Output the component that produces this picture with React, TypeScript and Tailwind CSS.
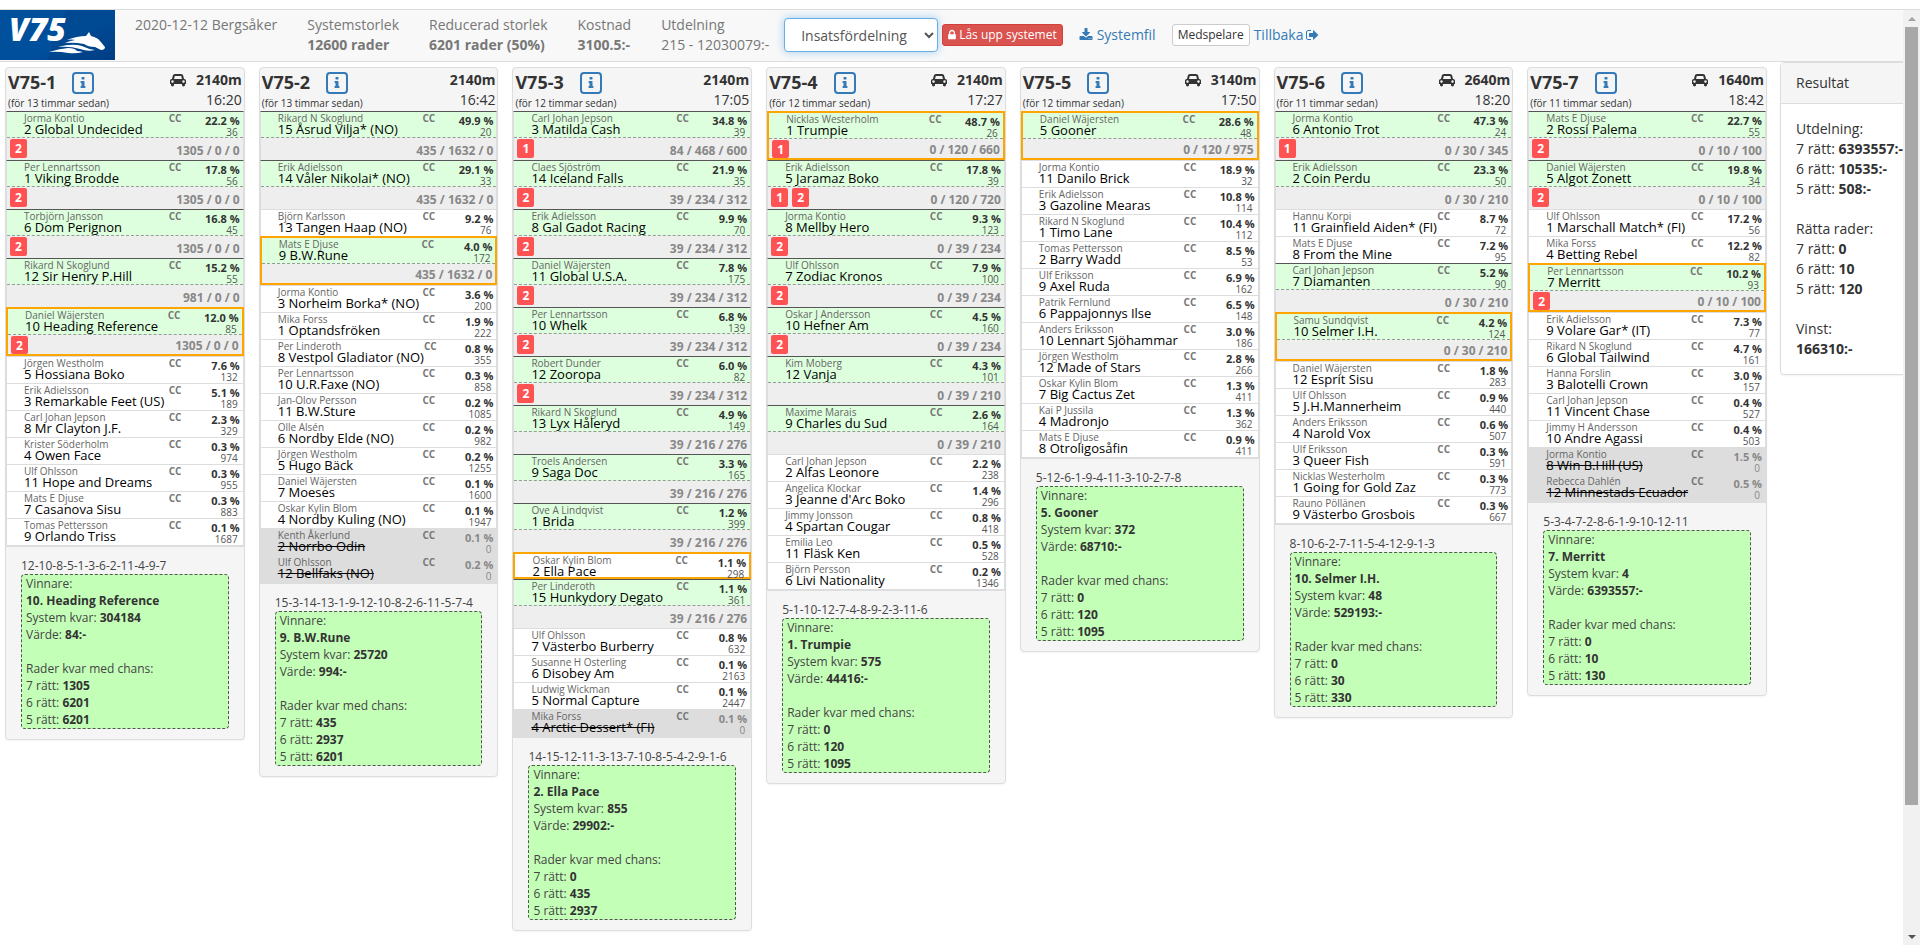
import React from 'react';
import clsx from 'clsx';

interface Horse {
  driver: string;
  name: string;
  percent: string;
  odds: number;
  chances?: string;
  badges?: number[];
  winner?: boolean;
  scratched?: boolean;
}

interface Race {
  id: number;
  updated: string;
  auto: boolean;
  distance: string;
  time: string;
  horses: Horse[];
  ranking: string;
  systems: string;
  value: string;
  left: [number, number, number];
}

type Extra = Omit<Horse, 'driver' | 'name' | 'percent' | 'odds'>;

const h = (driver: string, name: string, percent: string, odds: number, extra: Extra = {}): Horse => ({
  driver,
  name,
  percent,
  odds,
  ...extra,
});

const races: Race[] = [
  {
    id: 1,
    updated: 'för 13 timmar sedan',
    auto: true,
    distance: '2140m',
    time: '16:20',
    horses: [
      h('Jorma Kontio', '2 Global Undecided', '22.2', 36, { chances: '1305 / 0 / 0', badges: [2] }),
      h('Per Lennartsson', '1 Viking Brodde', '17.8', 56, { chances: '1305 / 0 / 0', badges: [2] }),
      h('Torbjörn Jansson', '6 Dom Perignon', '16.8', 45, { chances: '1305 / 0 / 0', badges: [2] }),
      h('Rikard N Skoglund', '12 Sir Henry P.Hill', '15.2', 55, { chances: '981 / 0 / 0' }),
      h('Daniel Wäjersten', '10 Heading Reference', '12.0', 85, { chances: '1305 / 0 / 0', badges: [2], winner: true }),
      h('Jörgen Westholm', '5 Hossiana Boko', '7.6', 132),
      h('Erik Adielsson', '3 Remarkable Feet (US)', '5.1', 189),
      h('Carl Johan Jepson', '8 Mr Clayton J.F.', '2.3', 329),
      h('Krister Söderholm', '4 Owen Face', '0.3', 974),
      h('Ulf Ohlsson', '11 Hope and Dreams', '0.3', 955),
      h('Mats E Djuse', '7 Casanova Sisu', '0.3', 883),
      h('Tomas Pettersson', '9 Orlando Triss', '0.1', 1687),
    ],
    ranking: '12-10-8-5-1-3-6-2-11-4-9-7',
    systems: '304184',
    value: '84:-',
    left: [1305, 6201, 6201],
  },
  {
    id: 2,
    updated: 'för 13 timmar sedan',
    auto: false,
    distance: '2140m',
    time: '16:42',
    horses: [
      h('Rikard N Skoglund', '15 Åsrud Vilja* (NO)', '49.9', 20, { chances: '435 / 1632 / 0' }),
      h('Erik Adielsson', '14 Våler Nikolai* (NO)', '29.1', 33, { chances: '435 / 1632 / 0' }),
      h('Björn Karlsson', '13 Tangen Haap (NO)', '9.2', 76),
      h('Mats E Djuse', '9 B.W.Rune', '4.0', 172, { chances: '435 / 1632 / 0', winner: true }),
      h('Jorma Kontio', '3 Norheim Borka* (NO)', '3.6', 200),
      h('Mika Forss', '1 Optandsfröken', '1.9', 222),
      h('Per Linderoth', '8 Vestpol Gladiator (NO)', '0.8', 355),
      h('Per Lennartsson', '10 U.R.Faxe (NO)', '0.3', 858),
      h('Jan-Olov Persson', '11 B.W.Sture', '0.2', 1085),
      h('Olle Alsén', '6 Nordby Elde (NO)', '0.2', 982),
      h('Jörgen Westholm', '5 Hugo Bäck', '0.2', 1255),
      h('Daniel Wäjersten', '7 Moeses', '0.1', 1600),
      h('Oskar Kylin Blom', '4 Nordby Kuling (NO)', '0.1', 1947),
      h('Kenth Åkerlund', '2 Norrbo Odin', '0.1', 0, { scratched: true }),
      h('Ulf Ohlsson', '12 Bellfaks (NO)', '0.2', 0, { scratched: true }),
    ],
    ranking: '15-3-14-13-1-9-12-10-8-2-6-11-5-7-4',
    systems: '25720',
    value: '994:-',
    left: [435, 2937, 6201],
  },
  {
    id: 3,
    updated: 'för 12 timmar sedan',
    auto: false,
    distance: '2140m',
    time: '17:05',
    horses: [
      h('Carl Johan Jepson', '3 Matilda Cash', '34.8', 39, { chances: '84 / 468 / 600', badges: [1] }),
      h('Claes Sjöström', '14 Iceland Falls', '21.9', 35, { chances: '39 / 234 / 312', badges: [2] }),
      h('Erik Adielsson', '8 Gal Gadot Racing', '9.9', 70, { chances: '39 / 234 / 312', badges: [2] }),
      h('Daniel Wäjersten', '11 Global U.S.A.', '7.8', 175, { chances: '39 / 234 / 312', badges: [2] }),
      h('Per Lennartsson', '10 Whelk', '6.8', 139, { chances: '39 / 234 / 312', badges: [2] }),
      h('Robert Dunder', '12 Zooropa', '6.0', 82, { chances: '39 / 234 / 312', badges: [2] }),
      h('Rikard N Skoglund', '13 Lyx Håleryd', '4.9', 149, { chances: '39 / 216 / 276' }),
      h('Troels Andersen', '9 Saga Doc', '3.3', 165, { chances: '39 / 216 / 276' }),
      h('Ove A Lindqvist', '1 Brida', '1.2', 399, { chances: '39 / 216 / 276' }),
      h('Oskar Kylin Blom', '2 Ella Pace', '1.1', 298, { winner: true }),
      h('Per Linderoth', '15 Hunkydory Degato', '1.1', 361, { chances: '39 / 216 / 276' }),
      h('Ulf Ohlsson', '7 Västerbo Burberry', '0.8', 632),
      h('Susanne H Osterling', '6 Disobey Am', '0.1', 2163),
      h('Ludwig Wickman', '5 Normal Capture', '0.1', 2447),
      h('Mika Forss', '4 Arctic Dessert* (FI)', '0.1', 0, { scratched: true }),
    ],
    ranking: '14-15-12-11-3-13-7-10-8-5-4-2-9-1-6',
    systems: '855',
    value: '29902:-',
    left: [0, 435, 2937],
  },
  {
    id: 4,
    updated: 'för 12 timmar sedan',
    auto: true,
    distance: '2140m',
    time: '17:27',
    horses: [
      h('Nicklas Westerholm', '1 Trumpie', '48.7', 26, { chances: '0 / 120 / 660', badges: [1], winner: true }),
      h('Erik Adielsson', '5 Jaramaz Boko', '17.8', 39, { chances: '0 / 120 / 720', badges: [1, 2] }),
      h('Jorma Kontio', '8 Mellby Hero', '9.3', 123, { chances: '0 / 39 / 234', badges: [2] }),
      h('Ulf Ohlsson', '7 Zodiac Kronos', '7.9', 100, { chances: '0 / 39 / 234', badges: [2] }),
      h('Oskar J Andersson', '10 Hefner Am', '4.5', 160, { chances: '0 / 39 / 234', badges: [2] }),
      h('Kim Moberg', '12 Vanja', '4.3', 101, { chances: '0 / 39 / 210' }),
      h('Maxime Marais', '9 Charles du Sud', '2.6', 164, { chances: '0 / 39 / 210' }),
      h('Carl Johan Jepson', '2 Alfas Leonore', '2.2', 238),
      h('Angelica Klockar', "3 Jeanne d'Arc Boko", '1.4', 296),
      h('Jimmy Jonsson', '4 Spartan Cougar', '0.8', 418),
      h('Emilia Leo', '11 Fläsk Ken', '0.5', 528),
      h('Björn Persson', '6 Livi Nationality', '0.2', 1346),
    ],
    ranking: '5-1-10-12-7-4-8-9-2-3-11-6',
    systems: '575',
    value: '44416:-',
    left: [0, 120, 1095],
  },
  {
    id: 5,
    updated: 'för 12 timmar sedan',
    auto: true,
    distance: '3140m',
    time: '17:50',
    horses: [
      h('Daniel Wäjersten', '5 Gooner', '28.6', 48, { chances: '0 / 120 / 975', winner: true }),
      h('Jorma Kontio', '11 Danilo Brick', '18.9', 32),
      h('Erik Adielsson', '3 Gazoline Mearas', '10.8', 114),
      h('Rikard N Skoglund', '1 Timo Lane', '10.4', 112),
      h('Tomas Pettersson', '2 Barry Wadd', '8.5', 53),
      h('Ulf Eriksson', '9 Axel Ruda', '6.9', 162),
      h('Patrik Fernlund', '6 Pappajonnys Ilse', '6.5', 148),
      h('Anders Eriksson', '10 Lennart Sjöhammar', '3.0', 186),
      h('Jörgen Westholm', '12 Made of Stars', '2.8', 266),
      h('Oskar Kylin Blom', '7 Big Cactus Zet', '1.3', 411),
      h('Kai P Jussila', '4 Madronjo', '1.3', 362),
      h('Mats E Djuse', '8 Otroligosåfin', '0.9', 411),
    ],
    ranking: '5-12-6-1-9-4-11-3-10-2-7-8',
    systems: '372',
    value: '68710:-',
    left: [0, 120, 1095],
  },
  {
    id: 6,
    updated: 'för 11 timmar sedan',
    auto: true,
    distance: '2640m',
    time: '18:20',
    horses: [
      h('Jorma Kontio', '6 Antonio Trot', '47.3', 24, { chances: '0 / 30 / 345', badges: [1] }),
      h('Erik Adielsson', '2 Coin Perdu', '23.3', 50, { chances: '0 / 30 / 210' }),
      h('Hannu Korpi', '11 Grainfield Aiden* (FI)', '8.7', 72),
      h('Mats E Djuse', '8 From the Mine', '7.2', 95),
      h('Carl Johan Jepson', '7 Diamanten', '5.2', 90, { chances: '0 / 30 / 210' }),
      h('Samu Sundqvist', '10 Selmer I.H.', '4.2', 124, { chances: '0 / 30 / 210', winner: true }),
      h('Daniel Wäjersten', '12 Esprit Sisu', '1.8', 283),
      h('Ulf Ohlsson', '5 J.H.Mannerheim', '0.9', 440),
      h('Anders Eriksson', '4 Narold Vox', '0.6', 507),
      h('Ulf Eriksson', '3 Queer Fish', '0.3', 591),
      h('Nicklas Westerholm', '1 Going for Gold Zaz', '0.3', 773),
      h('Rauno Pöllänen', '9 Västerbo Grosbois', '0.3', 667),
    ],
    ranking: '8-10-6-2-7-11-5-4-12-9-1-3',
    systems: '48',
    value: '529193:-',
    left: [0, 30, 330],
  },
  {
    id: 7,
    updated: 'för 11 timmar sedan',
    auto: true,
    distance: '1640m',
    time: '18:42',
    horses: [
      h('Mats E Djuse', '2 Rossi Palema', '22.7', 55, { chances: '0 / 10 / 100', badges: [2] }),
      h('Daniel Wäjersten', '5 Algot Zonett', '19.8', 34, { chances: '0 / 10 / 100', badges: [2] }),
      h('Ulf Ohlsson', '1 Marschall Match* (FI)', '17.2', 56),
      h('Mika Forss', '4 Betting Rebel', '12.2', 82),
      h('Per Lennartsson', '7 Merritt', '10.2', 93, { chances: '0 / 10 / 100', badges: [2], winner: true }),
      h('Erik Adielsson', '9 Volare Gar* (IT)', '7.3', 77),
      h('Rikard N Skoglund', '6 Global Tailwind', '4.7', 161),
      h('Hanna Forslin', '3 Balotelli Crown', '3.0', 157),
      h('Carl Johan Jepson', '11 Vincent Chase', '0.4', 527),
      h('Jimmy H Andersson', '10 Andre Agassi', '0.4', 503),
      h('Jorma Kontio', '8 Win B.Hill (US)', '1.5', 0, { scratched: true }),
      h('Rebecca Dahlén', '12 Minnestads Ecuador', '0.5', 0, { scratched: true }),
    ],
    ranking: '5-3-4-7-2-8-6-1-9-10-12-11',
    systems: '4',
    value: '6393557:-',
    left: [0, 10, 130],
  },
];

const icons = {
  info: {
    viewBox: '0 0 1792 1792',
    d: 'M1216 1344v128q0 26-19 45t-45 19h-512q-26 0-45-19t-19-45v-128q0-26 19-45t45-19h64v-384h-64q-26 0-45-19t-19-45v-128q0-26 19-45t45-19h384q26 0 45 19t19 45v576h64q26 0 45 19t19 45zm-128-1152v192q0 26-19 45t-45 19h-256q-26 0-45-19t-19-45v-192q0-26 19-45t45-19h256q26 0 45 19t19 45z',
  },
  car: {
    viewBox: '0 0 2048 1792',
    d: 'M480 1088q0-66-47-113t-113-47-113 47-47 113 47 113 113 47 113-47 47-113zm36-320h1016l-89-357q-2-8-14-17.5t-21-9.5h-768q-9 0-21 9.5t-14 17.5zm1372 320q0-66-47-113t-113-47-113 47-47 113 47 113 113 47 113-47 47-113zm160-96v384q0 14-9 23t-23 9h-96v128q0 80-56 136t-136 56-136-56-56-136v-128h-1024v128q0 80-56 136t-136 56-136-56-56-136v-128h-96q-14 0-23-9t-9-23v-384q0-93 65.5-158.5t158.5-65.5h28l105-419q23-94 104-157.5t179-63.5h768q98 0 179 63.5t104 157.5l105 419h28q93 0 158.5 65.5t65.5 158.5z',
  },
  lock: {
    viewBox: '320 0 1152 1792',
    d: 'M640 768h512v-192q0-106-75-181t-181-75-181 75-75 181v192zm832 96v576q0 40-28 68t-68 28h-960q-40 0-68-28t-28-68v-576q0-40 28-68t68-28h32v-192q0-184 132-316t316-132 316 132 132 316v192h32q40 0 68 28t28 68z',
  },
  download: {
    viewBox: '0 0 1792 1792',
    d: 'M1344 1344q0-26-19-45t-45-19-45 19-19 45 19 45 45 19 45-19 19-45zm256 0q0-26-19-45t-45-19-45 19-19 45 19 45 45 19 45-19 19-45zm128-224v320q0 40-28 68t-68 28h-1472q-40 0-68-28t-28-68v-320q0-40 28-68t68-28h465l135 136q58 56 136 56t136-56l136-136h464q40 0 68 28t28 68zm-325-569q17 41-14 70l-448 448q-18 19-45 19t-45-19l-448-448q-31-29-14-70 17-39 59-39h256v-448q0-26 19-45t45-19h256q26 0 45 19t19 45v448h256q42 0 59 39z',
  },
  exit: {
    viewBox: '0 0 1792 1792',
    d: 'M640 1440q0 4 1 20t.5 26.5-3 23.5-10 19.5-20.5 6.5h-320q-119 0-203.5-84.5t-84.5-203.5v-704q0-119 84.5-203.5t203.5-84.5h320q13 0 22.5 9.5t9.5 22.5q0 4 1 20t.5 26.5-3 23.5-10 19.5-20.5 6.5h-320q-66 0-113 47t-47 113v704q0 66 47 113t113 47h312l11.5 1 11.5 3 8 5.5 7 9 2 13.5zm928-544q0 26-19 45l-544 544q-19 19-45 19t-45-19-19-45v-288h-448q-26 0-45-19t-19-45v-384q0-26 19-45t45-19h448v-288q0-26 19-45t45-19 45 19l544 544q19 19 19 45z',
  },
};

const Icon: React.FC<{ name: keyof typeof icons; className: string }> = ({ name, className }) => (
  <svg aria-hidden="true" viewBox={icons[name].viewBox} fill="currentColor" className={className}>
    <path d={icons[name].d} />
  </svg>
);

const Logo: React.FC = () => (
  <svg viewBox="0 0 115 50" role="img" aria-label="V75" className="h-[50px] w-[115px] shrink-0">
    <defs>
      <linearGradient id="logoBg" x1="0" y1="0" x2="1" y2="1">
        <stop offset="0" stopColor="#00509b" />
        <stop offset="0.6" stopColor="#004f9c" />
        <stop offset="1" stopColor="#003f86" />
      </linearGradient>
    </defs>
    <rect width="115" height="50" fill="url(#logoBg)" />
    <path d="M48 50Q52 30 66 0H115V50Z" fill="#003a7d" opacity="0.3" />
    <text x="9" y="31" fill="#fff" fontFamily="'Open Sans', sans-serif" fontSize="32" fontWeight="800" fontStyle="italic">
      V75
    </text>
    <g fill="#fff">
      <path d="M67 30Q77 26 86 26L89 22L91 26Q98 28 100 31L105 37Q105 40 101 40L95 37Q88 37 84 34Q74 32 65 33Q69 31 75 30Q72 29 67 30Z" />
      <path d="M58 37Q72 33 82 36Q88 39 95 40Q88 42 80 39Q70 36 58 37Z" />
      <path d="M49 42Q58 39 68 38Q75 38 77 41Q79 41 83 42Q76 44 68 43Q58 41 49 42Z" />
    </g>
  </svg>
);

const HorseRow: React.FC<{ horse: Horse; selected: boolean }> = ({ horse, selected }) => (
  <li
    className={clsx(
      'flex flex-col',
      selected ? 'h-[49px]' : 'h-[27px]',
      horse.winner
        ? 'border-2 border-[#ffa500]'
        : ['border-x border-t border-x-[#ddd]', selected ? 'border-t-[#555]' : 'border-t-[#ddd]'],
      horse.scratched ? 'bg-[#ddd]' : 'bg-white',
    )}
  >
    <div className={clsx('flex h-[26px] shrink-0', selected && 'border-b border-dashed border-[#999] bg-[#dfd]')}>
      <div className="flex-1 pt-px pl-[17px] whitespace-nowrap">
        <p className="text-[10px] leading-[11px] text-[#666]">{horse.driver}</p>
        <p className={clsx('text-[13px] leading-[10px] text-black', horse.scratched && 'line-through')}>{horse.name}</p>
      </div>
      <span className="w-4 pt-px text-[10px] leading-[11px] font-bold text-[#777]">CC</span>
      <div className={clsx('w-[58px] pt-[3px] pr-[3px] text-right', horse.scratched ? 'text-[#888]' : 'text-[#333]')}>
        <p className="text-[11px] leading-[12px] font-bold">{horse.percent} %</p>
        <p className={clsx('pr-0.5 text-[10px] leading-[10px]', horse.scratched ? 'text-[#888]' : 'text-[#555]')}>{horse.odds}</p>
      </div>
    </div>
    {selected && (
      <div className="flex min-h-0 flex-1 items-start justify-between bg-[#eee] px-[3px]">
        <div className="flex gap-1 pt-px">
          {horse.badges?.map((badge) => (
            <span
              key={badge}
              className={clsx(
                'w-[17px] rounded-xs bg-[#ff5353] text-center text-[12px] leading-[19px] font-bold text-white',
                horse.winner ? 'h-[18px]' : 'h-[19px]',
              )}
            >
              {badge}
            </span>
          ))}
        </div>
        <span className={clsx('text-[12px] leading-[17px] font-bold text-[#888]', horse.winner ? 'pt-0.5' : 'pt-1')}>{horse.chances}</span>
      </div>
    )}
  </li>
);

const RaceCard: React.FC<{ race: Race }> = ({ race }) => {
  const winner = race.horses.find((horse) => horse.winner);
  const [number, ...name] = (winner?.name ?? '').split(' ');
  return (
    <section className="min-w-0 rounded border border-[#ddd] bg-[#f5f5f5] shadow-xs">
      <header className="flex h-[43px] justify-between px-0.5">
        <div>
          <div className="flex h-7 items-start gap-4 pt-1">
            <h2 className="text-[18px] leading-5 font-bold text-[#333]">V75-{race.id}</h2>
            <button type="button" aria-label={`Info V75-${race.id}`} className="flex size-[22px] items-center justify-center rounded border-2 border-[#337ab7] text-[#337ab7]">
              <Icon name="info" className="size-3.5" />
            </button>
          </div>
          <p className="text-[10px] leading-[14px] whitespace-nowrap text-[#333]">({race.updated})</p>
        </div>
        <div className="pt-0.5 text-right text-[14px] leading-5 text-[#333]">
          <p className="flex items-center justify-end gap-2.5 font-bold">
            {race.auto && <Icon name="car" className="h-3.5 w-4" />}
            {race.distance}
          </p>
          <p>{race.time}</p>
        </div>
      </header>
      <ul className="border-b-2 border-[#ddd]">
        {race.horses.map((horse) => (
          <HorseRow key={horse.name} horse={horse} selected={!!horse.chances} />
        ))}
      </ul>
      <div className="px-[15px] py-2.5 text-[12px] leading-[17px] text-[#444]">
        <p>{race.ranking}</p>
        <div className="rounded border border-dashed border-[#555] bg-[#c4ffb8] px-1">
          <p>Vinnare:</p>
          <p className="font-bold text-[#333]">
            {number}. {name.join(' ')}
          </p>
          <p>
            System kvar: <b className="text-[#333]">{race.systems}</b>
          </p>
          <p>
            Värde: <b className="text-[#333]">{race.value}</b>
          </p>
          <p className="mt-[17px]">Rader kvar med chans:</p>
          {race.left.map((rows, i) => (
            <p key={i}>
              {7 - i} rätt: <b className="text-[#333]">{rows}</b>
            </p>
          ))}
        </div>
      </div>
    </section>
  );
};

const Header: React.FC = () => (
  <nav className="flex items-start border-y border-[#ddd] bg-[#f8f8f8] text-[14px] leading-5 whitespace-nowrap text-[#777]">
    <Logo />
    <div className="flex h-[51px] gap-[30px] pt-[5px] pr-[15px] pl-5">
      <p>2020-12-12 Bergsåker</p>
      <p>
        Systemstorlek
        <br />
        <b>12600 rader</b>
      </p>
      <p>
        Reducerad storlek
        <br />
        <b>6201 rader (50%)</b>
      </p>
      <p>
        Kostnad
        <br />
        <b>3100.5:-</b>
      </p>
      <p>
        Utdelning
        <br />
        215 - 12030079:-
      </p>
    </div>
    <div className="flex items-center pt-2">
      <select
        aria-label="Visning"
        defaultValue="insats"
        className="h-[34px] w-[154px] rounded border border-[#66afe9] bg-white px-3 text-[14px] text-[#555] shadow-[0_0_8px_rgba(102,175,233,0.6)]"
      >
        <option value="insats">Insatsfördelning</option>
      </select>
      <button type="button" className="ml-1 flex h-[22px] items-center gap-[3px] rounded-[3px] border border-[#d43f3a] bg-[#d9534f] px-[5px] text-[12px] text-white">
        <Icon name="lock" className="h-3 w-2" />
        Lås upp systemet
      </button>
      <a href="#systemfil" className="ml-4 flex items-center gap-1 text-[#337ab7]">
        <Icon name="download" className="size-3.5" />
        Systemfil
      </a>
      <button type="button" className="ml-4 h-[22px] rounded-[3px] border border-[#ccc] bg-white px-[5px] text-[12px] leading-none text-[#333]">
        Medspelare
      </button>
      <a href="#tillbaka" className="ml-1 flex items-center gap-[3px] text-[#337ab7]">
        Tillbaka
        <Icon name="exit" className="size-3.5" />
      </a>
    </div>
  </nav>
);

const payouts = ['6393557:-', '10535:-', '508:-'];
const correctRows = ['0', '10', '120'];

const ResultPanel: React.FC = () => (
  <aside className="w-60 shrink-0 rounded border border-[#ddd] bg-white text-[14px] leading-5 whitespace-nowrap text-[#333] shadow-xs">
    <h2 className="border-b border-[#ddd] bg-[#f5f5f5] px-[15px] py-2.5">Resultat</h2>
    <div className="flex flex-col gap-5 p-[15px]">
      <div>
        <p>Utdelning:</p>
        {payouts.map((payout, i) => (
          <p key={payout}>
            {7 - i} rätt: <b>{payout}</b>
          </p>
        ))}
      </div>
      <div>
        <p>Rätta rader:</p>
        {correctRows.map((rows, i) => (
          <p key={rows}>
            {7 - i} rätt: <b>{rows}</b>
          </p>
        ))}
      </div>
      <div>
        <p>Vinst:</p>
        <p className="font-bold">166310:-</p>
      </div>
    </div>
  </aside>
);

const Scrollbar: React.FC = () => (
  <div aria-hidden="true" className="flex w-[17px] shrink-0 flex-col items-center border-t border-[#ddd] bg-[#f1f1f1]">
    <div className="flex h-[17px] items-center">
      <svg viewBox="0 0 8 4" className="h-1 w-2 fill-[#a3a3a3]">
        <path d="M4 0L8 4H0Z" />
      </svg>
    </div>
    <div className="w-[13px] flex-[778] bg-[#a8a8a8]" />
    <div className="flex-[123]" />
    <div className="flex h-[17px] items-center">
      <svg viewBox="0 0 8 4" className="h-1 w-2 fill-[#505050]">
        <path d="M0 0H8L4 4Z" />
      </svg>
    </div>
  </div>
);

export default function App() {
  return (
    <div className="flex h-screen bg-white pt-[9px] font-['Open_Sans',sans-serif]">
      <div className="min-w-0 flex-1 overflow-hidden">
        <Header />
        <main className="flex items-start">
          <div className="grid min-w-0 flex-1 grid-cols-7 items-start gap-[14px] pt-[5px] pr-[13px] pl-[5px]">
            {races.map((race) => (
              <RaceCard key={race.id} race={race} />
            ))}
          </div>
          <div className="w-[123px] shrink-0">
            <ResultPanel />
          </div>
        </main>
      </div>
      <Scrollbar />
    </div>
  );
}
